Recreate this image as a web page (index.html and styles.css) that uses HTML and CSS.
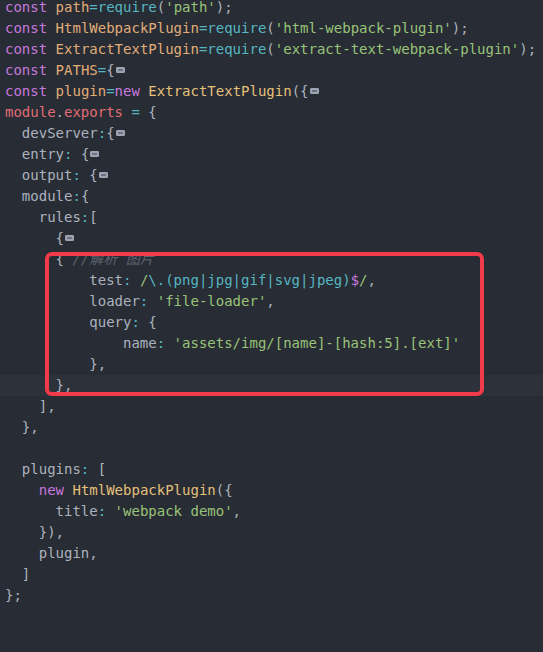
FILE: index.html
```html
<!DOCTYPE html>
<html lang="zh">
<head>
<meta charset="UTF-8" />
<meta name="viewport" content="width=device-width, initial-scale=1" />
<title>webpack.config.js</title>
<link rel="stylesheet" href="styles.css">
</head>
<body>

<div class="editor">
  <div class="code">
    <div class="line"><span class="kw">const</span> <span class="var">path</span><span class="op">=</span><span class="fn">require</span>(<span class="str">'path'</span>);</div>
    <div class="line"><span class="kw">const</span> <span class="var">HtmlWebpackPlugin</span><span class="op">=</span><span class="fn">require</span>(<span class="str">'html-webpack-plugin'</span>);</div>
    <div class="line"><span class="kw">const</span> <span class="var">ExtractTextPlugin</span><span class="op">=</span><span class="fn">require</span>(<span class="str">'extract-text-webpack-plugin'</span>);</div>
    <div class="line"><span class="kw">const</span> <span class="var">PATHS</span><span class="op">=</span>{<span class="fold"></span></div>
    <div class="line"><span class="kw">const</span> <span class="var">plugin</span><span class="op">=</span><span class="kw">new</span> <span class="cls">ExtractTextPlugin</span>({<span class="fold"></span></div>
    <div class="line"><span class="mod">module</span>.<span class="mod">exports</span> <span class="op">=</span> {</div>
    <div class="line">  devServer<span class="op">:</span>{<span class="fold"></span></div>
    <div class="line">  entry<span class="op">:</span> {<span class="fold"></span></div>
    <div class="line">  output<span class="op">:</span> {<span class="fold"></span></div>
    <div class="line">  module<span class="op">:</span>{</div>
    <div class="line">    rules<span class="op">:</span>[</div>
    <div class="line">      {<span class="fold"></span></div>
    <div class="line">      { <span class="cmt">//解析 图片</span></div>
    <div class="line">          test<span class="op">:</span> <span class="str">/</span><span class="op">\.(png|jpg|gif|svg|jpeg)</span><span class="kw">$</span><span class="str">/</span>,</div>
    <div class="line">          loader<span class="op">:</span> <span class="str">'file-loader'</span>,</div>
    <div class="line">          query<span class="op">:</span> {</div>
    <div class="line">              name<span class="op">:</span> <span class="str">'assets/img/[name]-[hash:5].[ext]'</span></div>
    <div class="line">          },</div>
    <div class="line current">      },</div>
    <div class="line">    ],</div>
    <div class="line">  },</div>
    <div class="line"> </div>
    <div class="line">  plugins<span class="op">:</span> [</div>
    <div class="line">    <span class="kw">new</span> <span class="cls">HtmlWebpackPlugin</span>({</div>
    <div class="line">      title<span class="op">:</span> <span class="str">'webpack demo'</span>,</div>
    <div class="line">    }),</div>
    <div class="line">    plugin,</div>
    <div class="line">  ]</div>
    <div class="line">};</div>
  </div>

  <!-- red highlight box -->
  <div class="mark"></div>
</div>

</body>
</html>
```

FILE: styles.css
```css
html, body {
  margin: 0;
  padding: 0;
  background: #282c34;
}
.editor {
  position: relative;
  width: 543px;
  height: 652px;
  overflow: hidden;
}
.code {
  margin-top: -3px;
  font-family: "DejaVu Sans Mono", "Noto Sans CJK SC", monospace;
  font-size: 14px;
  line-height: 21px;
  color: #abb2bf;
}
.line {
  height: 21px;
  padding-left: 5px;
  white-space: pre;
}
.line.current {
  background: #2c313a;
}
.kw { color: #c678dd; }
.var { color: #e0ac78; }
.cls { color: #e5c07b; }
.op { color: #56b6c2; }
.fn { color: #56b6c2; }
.str { color: #98c379; }
.mod { color: #e06c75; }
.cmt {
  color: #5c6370;
  font-style: italic;
}
/* fold marker */
.fold {
  display: inline-block;
  width: 9px;
  height: 6px;
  margin-left: 1px;
  background: #9da5b4;
  border-radius: 2px;
  vertical-align: 2px;
  box-shadow: inset 0 0 0 2px #9da5b4, inset 0 0 0 3px #6b717d;
}
.mark {
  position: absolute;
  left: 45px;
  top: 252px;
  width: 431px;
  height: 136px;
  border: 4px solid #f23a4b;
  border-radius: 7px;
}
```
